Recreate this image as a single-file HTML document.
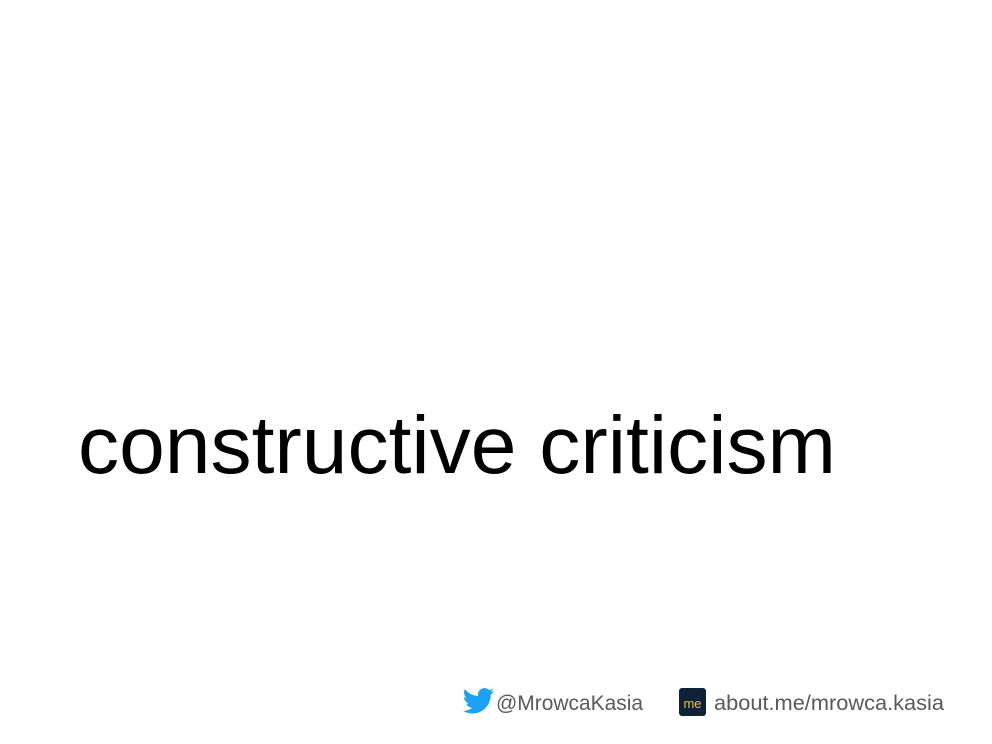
<!DOCTYPE html>
<html><head><style>
html,body{margin:0;padding:0;background:#fff;}
body{width:992px;height:744px;position:relative;overflow:hidden;font-family:"Liberation Sans",sans-serif;}
svg{position:absolute;left:0;top:0;}
</style></head><body>
<svg width="992" height="744" viewBox="0 0 992 744">
<text x="78" y="473" font-family="Liberation Sans, sans-serif" font-size="82" fill="#000" textLength="758" lengthAdjust="spacingAndGlyphs">constructive criticism</text>
<path d="M494 691c-1.2.5-2.4.9-3.7 1 1.3-.8 2.3-2 2.8-3.5-1.3.7-2.6 1.3-4 1.6-1.2-1.3-2.9-2-4.7-2-3.6 0-6.4 2.9-6.4 6.4 0 .5.1 1 .2 1.5-5.3-.3-10.1-2.8-13.3-6.7-.6 1-.9 2.1-.9 3.2 0 2.2 1.1 4.2 2.9 5.3-1 0-2-.3-2.9-.8 0 3.1 2.2 5.7 5.1 6.3-.5.1-1.1.2-1.7.2-.4 0-.8 0-1.2-.1.8 2.5 3.2 4.4 6 4.5-2.2 1.7-5 2.8-8 2.8-.5 0-1 0-1.5-.1 2.8 1.8 6.2 2.9 9.8 2.9 11.8 0 18.2-9.8 18.2-18.2v-.8c1.3-.9 2.3-2 3.3-3.3z" fill="#1da1f2"/>
<text x="496" y="710" font-family="Liberation Sans, sans-serif" font-size="21" fill="#595959" textLength="147" lengthAdjust="spacingAndGlyphs">@MrowcaKasia</text>
<rect x="679" y="688" width="27" height="28" rx="3" fill="#0d2236"/>
<text x="692.5" y="708" text-anchor="middle" font-family="Liberation Sans, sans-serif" font-size="13" fill="#f2c230">me</text>
<text x="714" y="710" font-family="Liberation Sans, sans-serif" font-size="21" fill="#595959" textLength="230" lengthAdjust="spacingAndGlyphs">about.me/mrowca.kasia</text>
</svg>
</body></html>
